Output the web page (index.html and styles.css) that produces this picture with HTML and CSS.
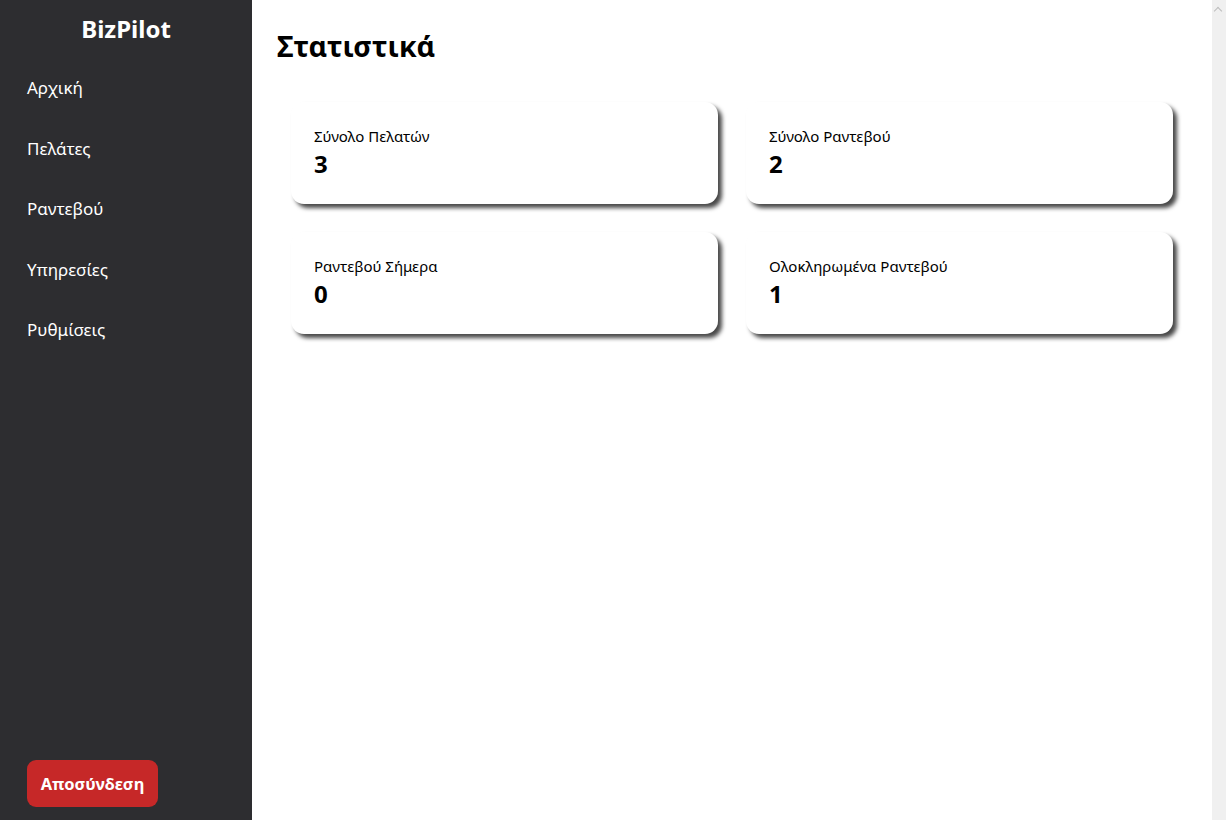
FILE: index.html
```
<!DOCTYPE html>
<html lang="el">
<head>
<meta charset="utf-8">
<title>BizPilot</title>
<link rel="stylesheet" href="styles.css">
</head>
<body>
<div class="app">
  <aside class="sidebar">
    <div class="brand">BizPilot</div>
    <nav class="menu">
      <a class="menu-item">Αρχική</a>
      <a class="menu-item">Πελάτες</a>
      <a class="menu-item">Ραντεβού</a>
      <a class="menu-item">Υπηρεσίες</a>
      <a class="menu-item">Ρυθμίσεις</a>
    </nav>
    <button class="logout">Αποσύνδεση</button>
  </aside>
  <main class="main">
    <h1 class="title">Στατιστικά</h1>
    <div class="stats">
      <div class="card"><div class="card-label">Σύνολο Πελατών</div><div class="card-value">3</div></div>
      <div class="card"><div class="card-label">Σύνολο Ραντεβού</div><div class="card-value">2</div></div>
      <div class="card"><div class="card-label">Ραντεβού Σήμερα</div><div class="card-value">0</div></div>
      <div class="card"><div class="card-label">Ολοκληρωμένα Ραντεβού</div><div class="card-value">1</div></div>
    </div>
  </main>
  <div class="scrollbar"><div class="scroll-up"></div></div>
</div>
</body>
</html>
```
FILE: styles.css
```
* { box-sizing: border-box; }
html, body { margin: 0; height: 100%; }
body {
  font-family: "Noto Sans", "Open Sans", sans-serif;
  background: #fff;
  color: #000;
}
.app {
  display: flex;
  height: 820px;
  overflow: hidden;
}
.sidebar {
  width: 252px;
  flex: 0 0 252px;
  background: #2d2d30;
  color: #fff;
  display: flex;
  flex-direction: column;
  padding: 0 27px 13px 27px;
}
.brand {
  font-weight: 700;
  font-size: 24px;
  text-align: center;
  padding-top: 12px;
  height: 58px;
}
.menu {
  display: flex;
  flex-direction: column;
  flex: 1;
}
.menu-item {
  font-size: 17px;
  line-height: 24px;
  height: 60.5px;
  display: flex;
  align-items: center;
  color: #fff;
}
.logout {
  align-self: flex-start;
  background: #c62828;
  color: #fff;
  border: none;
  border-radius: 9px;
  font-family: inherit;
  font-weight: 700;
  font-size: 16.5px;
  padding: 0 8px;
  height: 47px;
  width: 131px;
}
.main {
  flex: 1;
  padding: 22px 25px;
}
.title {
  margin: 0 0 18px 0;
  font-size: 28.5px;
  line-height: 48px;
  font-weight: 700;
}
.stats {
  display: grid;
  grid-template-columns: 1fr 1fr;
}
.card {
  margin: 14px;
  height: 102px;
  border-radius: 13px;
  background: #fff;
  box-shadow: 4px 4px 4px rgba(0,0,0,0.72);
  padding: 24px 23px;
}
.card-label {
  font-size: 15px;
  line-height: 20px;
}
.card-value {
  font-size: 24px;
  font-weight: 700;
  line-height: 30px;
  padding-top: 3px;
}
.scrollbar {
  flex: 0 0 14px;
  background: #f0f0f0;
  position: relative;
}
.scroll-up {
  position: absolute;
  top: 8px;
  left: 3px;
  width: 6px;
  height: 6px;
  border-left: 1.5px solid #bdbdbd;
  border-top: 1.5px solid #bdbdbd;
  transform: rotate(45deg);
}
```
